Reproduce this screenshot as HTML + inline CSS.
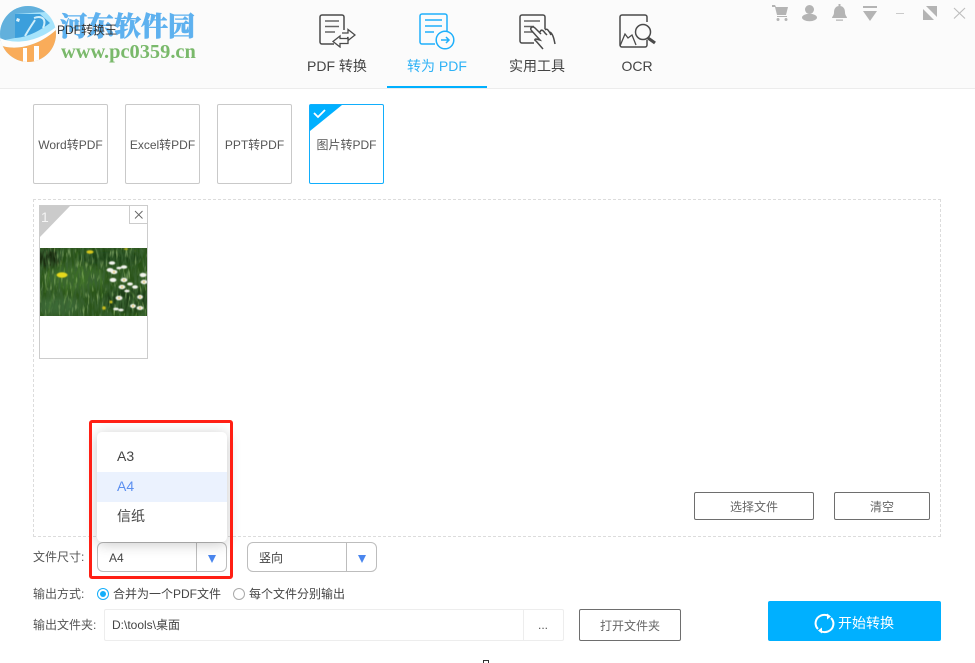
<!DOCTYPE html>
<html><head><meta charset="utf-8">
<style>
*{box-sizing:border-box}
html,body{margin:0;padding:0;width:975px;height:663px;overflow:hidden;background:#fff}
body{font-family:"Liberation Sans","Noto Sans CJK SC",sans-serif;color:#444;font-size:12px;position:relative}
.a{position:absolute;white-space:nowrap}
.tile{position:absolute;top:104px;width:75px;height:80px;border:1px solid #c9c9c9;border-radius:2px;background:#fff;text-align:center;line-height:81px;font-size:12px;color:#555}
.btn{position:absolute;border:1px solid #6e6e6e;border-radius:2px;background:#fff;text-align:center;font-size:12px;color:#666}
.sel{position:absolute;top:542px;width:130px;height:30px;border:1px solid #bdbdbd;border-radius:6px;background:#fff;font-size:12px;line-height:30px;color:#444}
.sel i{position:absolute;left:98px;top:0;width:1px;height:28px;background:#bdbdbd}
.sel b{position:absolute;left:110px;top:12px;width:0;height:0;border-left:4.500px solid transparent;border-right:4.500px solid transparent;border-top:8px solid #4a86ee}
.tab{position:absolute;top:56px;width:100px;text-align:center;font-size:14px;color:#444;line-height:20px}
</style></head><body>

<div class="a" style="left:0;top:0;width:975px;height:89px;background:#fbfbfb;border-bottom:1px solid #ececec"></div>

<!-- logo -->
<svg class="a" style="left:0;top:5px" width="58" height="58" viewBox="0 0 58 58">
<defs><clipPath id="cc"><circle cx="28" cy="29" r="28"/></clipPath></defs>
<g clip-path="url(#cc)">
<rect width="58" height="58" fill="#a6e3fb"/>
<path d="M0 0H58V14L46 7L15 9V33L0 36Z" fill="#62b0dc"/>
<path d="M15 9H40L50 18C42 24 30 32 15 33Z" fill="#3b9fdc"/>
<path d="M0 40C14 46 38 42 57 24V58H0Z" fill="#f9ac5a"/>
<path d="M0 33C12 39 36 39 57 21L57 24C38 42 14 46 0 40Z" fill="#fdfdfd"/>
<path d="M23 43h4v15h-4zM34 41h5v17h-5z" fill="#fefefe"/>
<path d="M17 13l3 1-1 3-3-1z" fill="#dff3fb"/>
<path d="M25 31C29 24 33 18 35 15M34 13C42 10 47 14 43 23" stroke="#cfeefa" stroke-width="2" fill="none"/>
</g>
</svg>
<div class="a" style="left:60px;top:7px;font-family:'Noto Serif CJK SC',serif;font-weight:900;font-size:27px;line-height:36px;-webkit-text-stroke:.5px #5eb1ef;color:#5eb1ef">河东软件园</div>
<div class="a" style="left:57px;top:23px;font-size:12px;line-height:14px;color:#333">PDF转换王</div>
<div class="a" style="left:61px;top:42px;font-family:'Liberation Serif',serif;font-weight:700;font-size:20.400px;line-height:21px;color:#7ab96b">www.pc0359.cn</div>

<!-- tabs -->
<svg class="a" style="left:318px;top:14px" width="38" height="34" viewBox="0 0 38 34" fill="none" stroke="#4a4a4a" stroke-width="1.500">
<path d="M16 30H4a2 2 0 0 1-2-2V3a2 2 0 0 1 2-2h20a2 2 0 0 1 2 2v13"/>
<path d="M7 7h14M7 12.500h14M7 18h10" stroke="#666"/>
<path d="M24 19h6v-3.500l7 5.500-7 5.500v-3h-1" stroke-width="1.300"/>
<path d="M22 22l-7 5.500 7 5.500v-3.500h8v-5h-8z" fill="#fbfbfb" stroke-width="1.300"/>
</svg>
<svg class="a" style="left:418px;top:13px" width="38" height="38" viewBox="0 0 38 38" fill="none" stroke="#1fb0fb" stroke-width="1.500">
<path d="M17 31H4a2 2 0 0 1-2-2V3a2 2 0 0 1 2-2h23a2 2 0 0 1 2 2v15"/>
<path d="M7 7h17M7 13h17M7 19h9"/>
<circle cx="27" cy="27" r="8.800" fill="#fbfbfb"/>
<path d="M23 27h8M28 24l3 3-3 3"/>
</svg>
<svg class="a" style="left:518px;top:14px" width="38" height="38" viewBox="0 0 38 38" fill="none" stroke="#4a4a4a" stroke-width="1.500">
<path d="M16 29H4a2 2 0 0 1-2-2V3a2 2 0 0 1 2-2h21a2 2 0 0 1 2 2v12"/>
<path d="M6 7h16M6 12.500h10M6 18h9" stroke="#666"/>
<path d="M13 16l9 10-4-1c-1 0-2 1 0 2l7 8h6c3-2 6-3 6-5C37 25 35 20 32 18C30 15 28 15 27 16C25 14 23 15 22 18L17 14C15 12 12 13 13 16Z" fill="#fbfbfb" stroke="none"/>
<path d="M13 16c-1-3 2-4 4-2l6 6M22 18c1-3 3-2 5 1l2 2M27 16c2-2 3 0 5 3l1 2M32 18c3 2 4 7 5 12" stroke-width="1.500"/>
<path d="M13 16l9 10-4-1c-1 0-2 1 0 2l7 8" stroke-width="1.500"/>
</svg>
<svg class="a" style="left:618px;top:14px" width="38" height="36" viewBox="0 0 38 36" fill="none" stroke="#4a4a4a" stroke-width="1.500">
<path d="M29 8V3a2 2 0 0 0-2-2H4a2 2 0 0 0-2 2v28a2 2 0 0 0 2 2h23a2 2 0 0 0 2-2v-5"/>
<path d="M2 32l5-12 3 4 4-3 4 10" stroke-width="1.300"/>
<circle cx="25" cy="18" r="7.500" fill="#fbfbfb"/>
<path d="M30 24l7 5" stroke-width="3.200"/>
</svg>
<div class="tab" style="left:287px">PDF 转换</div>
<div class="tab" style="left:387px;color:#2eb2f6">转为 PDF</div>
<div class="tab" style="left:487px">实用工具</div>
<div class="tab" style="left:587px">OCR</div>
<div class="a" style="left:387px;top:86px;width:100px;height:2px;background:#00b0ff"></div>

<!-- window icons -->
<svg class="a" style="left:770px;top:3px" width="205" height="20" viewBox="0 0 205 20" fill="#b4b4b4">
<path d="M2 2h3l1 2h12l-2 8H7L5 4H2zM7 13h10v1H7z"/><circle cx="8" cy="16.500" r="1.500"/><circle cx="16" cy="16.500" r="1.500"/>
<circle cx="39.500" cy="6.500" r="4.500"/><ellipse cx="39.500" cy="14.500" rx="7.500" ry="3.700"/>
<path d="M69.500 3c4 0 5.500 3 5.500 6.500 0 3 2 4 2 5.500H62c0-1.500 2-2.500 2-5.500C64 6 65.500 3 69.500 3zM68.500 1h2v2h-2zM66 16.500h7v1.200h-7z"/>
<path d="M93 3h14v2H93zM93 8h14l-7 10z"/>
<path d="M126 10h8v1h-8z" fill="#cacaca"/>
<path d="M156 3H167V14ZM153 6L164 17H153Z"/>
<path d="M184 5l11 10.500M195 5l-11 10.500" stroke="#bcbcbc" fill="none" stroke-width="1.100"/>
</svg>

<!-- tiles -->
<div class="tile" style="left:33px">Word转PDF</div>
<div class="tile" style="left:125px">Excel转PDF</div>
<div class="tile" style="left:217px">PPT转PDF</div>
<div class="tile" style="left:309px;border-color:#11aefc;color:#555">图片转PDF</div>
<svg class="a" style="left:309px;top:104px" width="34" height="28" viewBox="0 0 34 28">
<path d="M1 1H33L1 27Z" fill="#00b0ff"/>
<path d="M5 9l4 4 7-7" stroke="#fff" stroke-width="1.800" fill="none"/>
</svg>

<!-- drop zone -->
<div class="a" style="left:33px;top:199px;width:908px;height:338px;border:1px dashed #dcdcdc"></div>
<div class="a" style="left:39px;top:205px;width:109px;height:154px;border:1px solid #cccccc;background:#fff"></div>
<svg class="a" style="left:40px;top:206px" width="32" height="32"><path d="M0 0H30L0 31Z" fill="#cbcbcb"/></svg>
<div class="a" style="left:41px;top:209px;font-size:14px;line-height:16px;color:#f4f4f4">1</div>
<div class="a" style="left:129px;top:205px;width:19px;height:19px;border:1px solid #cccccc;background:#fff"></div>
<svg class="a" style="left:129px;top:205px" width="19" height="19"><path d="M6 6l7.500 7.500M13.500 6L6 13.500" stroke="#666" stroke-width=".9"/></svg>

<!-- photo -->
<svg class="a" style="left:40px;top:248px" width="107" height="68" viewBox="0 0 107 68">
<defs>
<filter id="dk" x="0" y="0" width="100%" height="100%">
<feTurbulence type="fractalNoise" baseFrequency=".38 .08" numOctaves="2" seed="7"/>
<feColorMatrix type="matrix" values="0 0 0 0 .04  0 0 0 0 .12  0 0 0 0 .03  2.800 0 0 0 -1"/>
</filter>
<filter id="lt" x="0" y="0" width="100%" height="100%">
<feTurbulence type="fractalNoise" baseFrequency=".42 .09" numOctaves="2" seed="21"/>
<feColorMatrix type="matrix" values="0 0 0 0 .36  0 0 0 0 .55  0 0 0 0 .2  2.200 0 0 0 -1.250"/>
</filter>
<filter id="bl" x="-20%" y="-20%" width="140%" height="140%"><feGaussianBlur stdDeviation="3"/></filter>
<filter id="b1"><feGaussianBlur stdDeviation=".45"/></filter>
</defs>
<rect width="107" height="68" fill="#2a5419"/>
<g filter="url(#bl)"><ellipse cx="35" cy="30" rx="30" ry="12" fill="#3a6c25"/><ellipse cx="18" cy="58" rx="24" ry="9" fill="#3b6935"/><ellipse cx="70" cy="10" rx="32" ry="8" fill="#1d4218"/><ellipse cx="88" cy="52" rx="24" ry="12" fill="#1a3e14"/><ellipse cx="8" cy="10" rx="14" ry="9" fill="#12260c"/></g>
<rect width="107" height="68" filter="url(#dk)"/>
<rect width="107" height="68" filter="url(#lt)"/>
<g stroke="#76ab44" stroke-width=".8" fill="none" opacity=".35" filter="url(#b1)">
<path d="M5 45L10 18M25 55L28 26M44 50L42 18M62 50L60 22M30 60L35 35M8 66L14 42M88 40L104 62M18 35L22 10M40 30L37 4"/>
</g>
<g filter="url(#b1)">
<ellipse cx="22" cy="27" rx="5.500" ry="2.700" fill="#e6d81a"/><ellipse cx="50" cy="4" rx="3.500" ry="1.700" fill="#d8c81c"/><circle cx="64" cy="60" r="1.800" fill="#c9bd1f"/><circle cx="71" cy="54" r="1.500" fill="#c9bd1f"/><ellipse cx="86" cy="1" rx="2" ry="1" fill="#a8a81c"/>
<g fill="#f4f5ef">
<ellipse cx="72" cy="15" rx="3.200" ry="1.800"/><ellipse cx="70" cy="22" rx="3.400" ry="2"/><ellipse cx="74" cy="24" rx="3.400" ry="2.100"/><ellipse cx="79" cy="20" rx="2.500" ry="1.300"/><ellipse cx="84" cy="19" rx="3.200" ry="1.800"/><ellipse cx="73" cy="32" rx="3.400" ry="2.100"/><ellipse cx="84" cy="32" rx="3.400" ry="2.200"/><ellipse cx="103" cy="27" rx="3.400" ry="2.100"/><ellipse cx="104" cy="34" rx="3.400" ry="2.200"/><ellipse cx="90" cy="36" rx="2.900" ry="1.600"/><ellipse cx="82" cy="39" rx="3.400" ry="2.200"/><ellipse cx="95" cy="39" rx="2.900" ry="1.700"/><ellipse cx="87" cy="43" rx="2.700" ry="1.400"/><ellipse cx="100" cy="49" rx="2.900" ry="2.100"/><ellipse cx="79" cy="50" rx="3.400" ry="2.300"/><ellipse cx="93" cy="58" rx="2.900" ry="2"/><ellipse cx="100" cy="60" rx="3.400" ry="2"/><ellipse cx="76" cy="61" rx="2.700" ry="1.400"/><ellipse cx="81" cy="62" rx="2.700" ry="1.400"/>
</g>
<g fill="#e5c53a">
<circle cx="74" cy="24" r="1"/><circle cx="84" cy="32" r="1"/><circle cx="82" cy="39" r="1"/><circle cx="79" cy="50" r="1"/><circle cx="100" cy="60" r="1"/><circle cx="104" cy="34" r="1"/><circle cx="100" cy="49" r="1"/><circle cx="93" cy="58" r="1"/>
</g></g>
</svg>

<!-- buttons in drop zone -->
<div class="btn" style="left:694px;top:492px;width:120px;height:28px;line-height:29px">选择文件</div>
<div class="btn" style="left:834px;top:492px;width:96px;height:28px;line-height:29px">清空</div>

<!-- size row -->
<div class="a" style="left:33px;top:549px;line-height:16px;font-size:12px;color:#555">文件尺寸:</div>
<div class="sel" style="left:97px;padding-left:11px">A4<i></i><b></b></div>
<div class="sel" style="left:247px;padding-left:11px">竖向<i></i><b></b></div>

<!-- dropdown -->
<div class="a" style="left:97px;top:432px;width:130px;height:110px;background:#fff;border-radius:5px;box-shadow:0 2px 14px rgba(0,0,0,.22)"></div>
<div class="a" style="left:97px;top:472px;width:130px;height:30px;background:#ebf2fe"></div>
<div class="a" style="left:117px;top:446px;font-size:14px;line-height:20px;color:#444">A3</div>
<div class="a" style="left:117px;top:476px;font-size:14px;line-height:20px;color:#5b8ff0">A4</div>
<div class="a" style="left:117px;top:506px;font-size:14px;line-height:20px;color:#444">信纸</div>
<div class="a" style="left:89px;top:420px;width:144px;height:159px;border:3px solid #ff1f14;border-radius:3px"></div>

<!-- output mode -->
<div class="a" style="left:33px;top:586px;line-height:16px;font-size:12px;color:#555">输出方式:</div>
<svg class="a" style="left:96px;top:587px" width="14" height="14"><circle cx="7" cy="7" r="5.500" fill="#fff" stroke="#13aefa"/><circle cx="7" cy="7" r="3" fill="#13aefa"/></svg>
<div class="a" style="left:113px;top:586px;line-height:16px;font-size:12px;color:#444">合并为一个PDF文件</div>
<svg class="a" style="left:232px;top:587px" width="14" height="14"><circle cx="7" cy="7" r="5.500" fill="#fff" stroke="#aaa"/></svg>
<div class="a" style="left:249px;top:586px;line-height:16px;font-size:12px;color:#444">每个文件分别输出</div>

<!-- folder row -->
<div class="a" style="left:33px;top:617px;line-height:16px;font-size:12px;color:#555">输出文件夹:</div>
<div class="a" style="left:104px;top:609px;width:460px;height:32px;border:1px solid #ededed;border-radius:2px;background:#fff;line-height:31px;padding-left:7px;font-size:12px;color:#444">D:\tools\桌面</div>
<div class="a" style="left:523px;top:610px;width:1px;height:30px;background:#ededed"></div>
<div class="a" style="left:538px;top:617px;line-height:16px;font-size:12px;color:#555">...</div>
<div class="btn" style="left:579px;top:609px;width:102px;height:32px;line-height:33px">打开文件夹</div>

<!-- start -->
<div class="a" style="left:768px;top:601px;width:173px;height:40px;background:#00b0ff;border-radius:2px"></div>
<svg class="a" style="left:814px;top:613px" width="21" height="21" viewBox="0 0 21 21" fill="none" stroke="#fff" stroke-width="2">
<path d="M4 16C0 12 1 5 7 2.500C10 1.500 13 2 15 3"/><path d="M17 5C21 9 20 16 14 18.500C11 19.500 8 19 6 18"/>
<path d="M13 .5L17 3.500L13 6.500z" fill="#fff" stroke="none"/><path d="M8 14.500L4 17.500L8 20.500z" fill="#fff" stroke="none"/>
</svg>
<div class="a" style="left:838px;top:613px;line-height:20px;font-size:14px;color:#fff">开始转换</div>

<!-- cursor fragment -->
<div class="a" style="left:483px;top:660px;width:6px;height:3px;border:1px solid #333;border-bottom:0;background:#fff"></div>

</body></html>
